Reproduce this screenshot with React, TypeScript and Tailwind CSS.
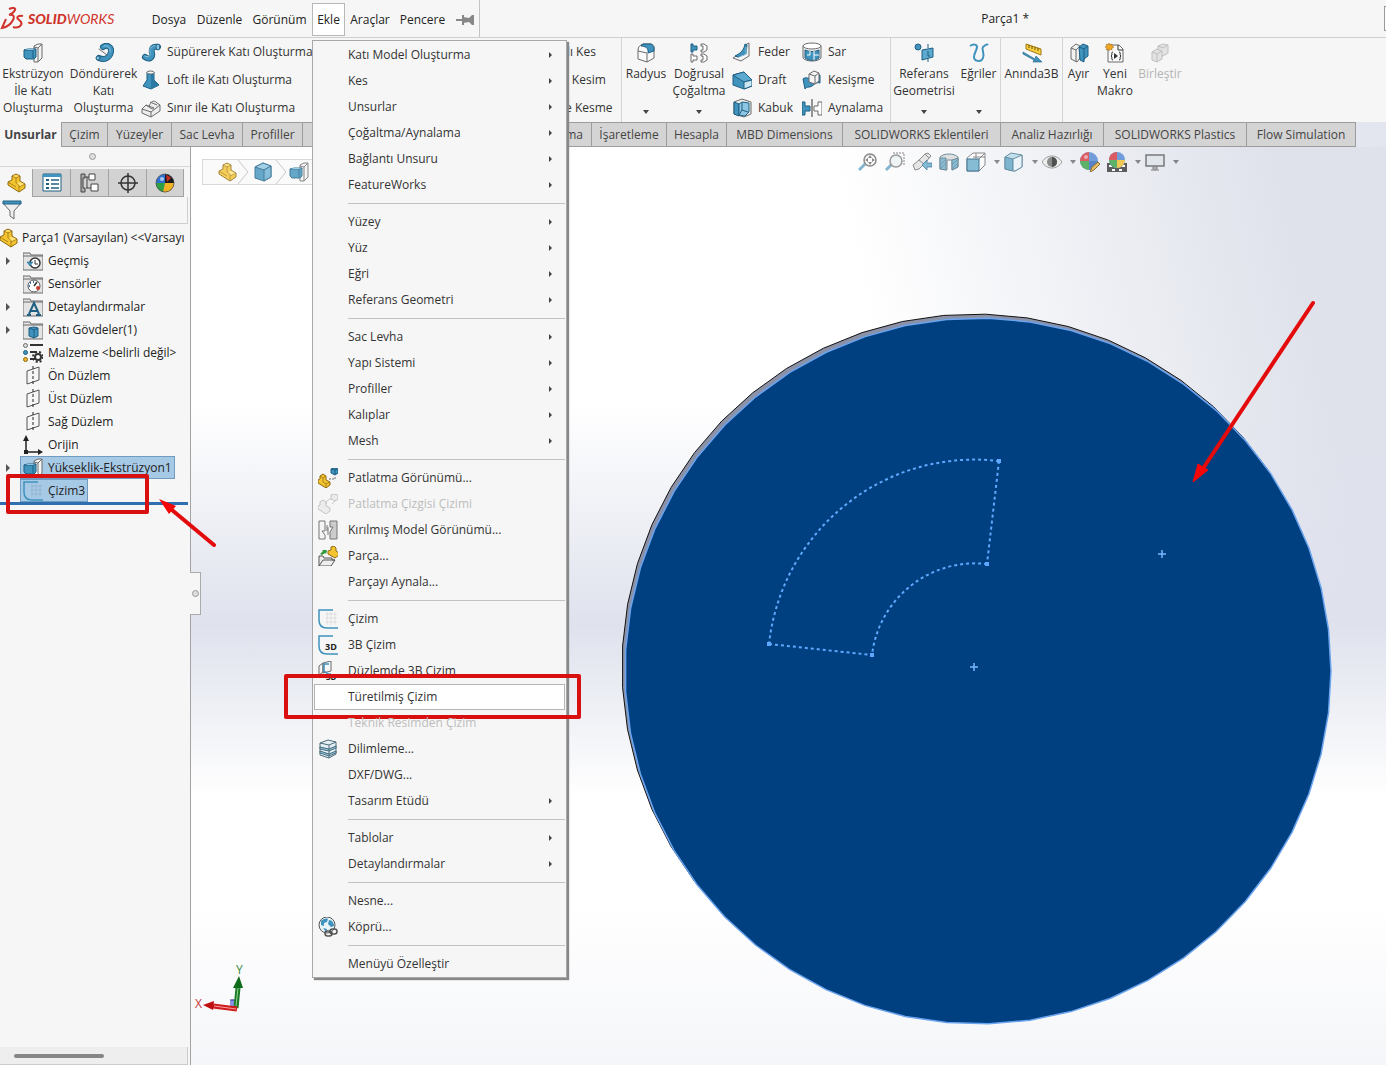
import React from 'react';
import { clsx } from 'clsx';

const B = '#3f93bd';
const BL = '#8cc6e2';
const BD = '#1f5f83';
const G = '#6b6b6b';

// All icons are drawn on a 20x20 grid
const icons: Record<string, React.ReactNode> = {
  extrude: (
    <g strokeWidth="1" strokeLinejoin="round">
      <path d="M11 3l4-2h4v14l-4 4h-4z" fill="#f4f4f4" stroke={G} />
      <path d="M15 5v14M15 5l4-4M11 4l4 1" fill="none" stroke={G} />
      <path d="M1 7l4-1h8v8l-2 2H3l-2-2z" fill={B} stroke={BD} />
      <path d="M1 7h9v8M10 7l3-1" fill="none" stroke={BD} />
      <path d="M2 7l3-1h7l-2 1z" fill={BL} />
    </g>
  ),
  revolve: (
    <g fill="none" strokeLinecap="round">
      <path d="M9 4c4-3 9 0 8 5s-6 9-12 6" stroke={BD} strokeWidth="6" />
      <path d="M9 4c4-3 9 0 8 5s-6 9-12 6" stroke={B} strokeWidth="4" />
      <path d="M10 3c4-1 7 2 6 6" stroke={BL} strokeWidth="1" />
      <circle cx="4" cy="15" r="2" fill={BL} stroke={BD} />
      <path d="M5 6l8 6" stroke={G} strokeWidth="1" />
    </g>
  ),
  sweep: (
    <g fill="none" strokeLinecap="round">
      <path d="M4 15c4 3 8 1 7-4s1-7 6-6" stroke={BD} strokeWidth="6" />
      <path d="M4 15c4 3 8 1 7-4s1-7 6-6" stroke={B} strokeWidth="4" />
      <path d="M4 14c3 2 6 0 5-4s2-7 7-6" stroke={BL} strokeWidth="1" />
      <ellipse cx="17" cy="5" rx="2" ry="3" fill={BL} stroke={BD} />
    </g>
  ),
  loft: (
    <g strokeLinejoin="round">
      <path d="M6 2v8l-4 6 8 3 8-4-5-5V2z" fill={B} stroke={BD} />
      <path d="M10 4v15l8-4-5-5V3z" fill="#2b7aa5" />
      <ellipse cx="9.500" cy="2.500" rx="3.500" ry="1.500" fill="#fff" stroke={G} />
    </g>
  ),
  boundary: (
    <g fill="#eee" stroke={G} strokeLinejoin="round">
      <path d="M1 11l4-4 3 2c1-5 5-8 8-4l3 2v6l-9 6-9-4z" />
      <path d="M1 11l9 3 9-7M10 14v5M5 7l8 3M8 9c1 1 3 2 5 2M9 4l7 3" fill="none" />
    </g>
  ),
  fillet: (
    <g strokeLinejoin="round">
      <path d="M2 7c0-3 2-5 5-6h8c2 1 3 2 3 4v10l-7 4-9-3z" fill="#fafafa" stroke={G} />
      <path d="M5 3l2-2h8c2 1 3 2 3 4v3l-6 2c1-5-3-7-7-7z" fill={B} stroke={BD} />
      <path d="M11 10v9M2 8l9 2" fill="none" stroke={G} />
    </g>
  ),
  pattern: (
    <g fill="#fff" stroke={G}>
      <path d="M2 1h2v2h4v4H4v2H2z" fill={B} stroke={BD} />
      <path d="M12 1h3l3 2v4l-3 2h-3V7h2V3h-2z" />
      <path d="M2 11h2v2h4v4H4v2H2z" />
      <path d="M12 11h3l3 2v4l-3 2h-3v-2h2v-4h-2z" />
    </g>
  ),
  rib: (
    <g strokeLinejoin="round">
      <path d="M13 3l4-2v13l-8 5-8-3 3-2 9-2z" fill="#f4f4f4" stroke={G} />
      <path d="M13 2c-1 6-4 9-10 12l3 1 8-3 1-9z" fill={B} stroke={BD} />
      <path d="M14 5v7l-7 3" fill="none" stroke={BL} />
    </g>
  ),
  draft: (
    <g strokeLinejoin="round">
      <path d="M1 5l11-3 8 8v6l-8 3-11-4z" fill={B} stroke={BD} />
      <path d="M1 5l11-3 8 8-8 2z" fill="#5ba9cf" stroke={BD} />
      <path d="M12 12v7l8-3v-6z" fill="#cbe5f2" stroke={BD} />
    </g>
  ),
  shell: (
    <g strokeLinejoin="round">
      <path d="M2 4l8-3 9 3v12l-7 3-10-3z" fill="#eee" stroke={G} />
      <path d="M2 4l5 2v12l-5-2z" fill={B} stroke={BD} />
      <path d="M7 6l3-2 7 1v9l-4 4-6-1z" fill={BL} stroke={BD} />
      <path d="M10 4v8l-3 5M10 12l6 2" fill="none" stroke={BD} />
    </g>
  ),
  wrap: (
    <g>
      <path d="M1 4v12c2 4 16 4 18 0V4z" fill="#eee" stroke={G} />
      <path d="M3 8c4 2 10 2 14 0v8c-4 3-10 3-14 0z" fill={B} stroke={BD} />
      <path d="M8 9v4H5M12 9v9M12 13h5" fill="none" stroke="#fff" />
      <ellipse cx="10" cy="4" rx="9" ry="3" fill="#fff" stroke={G} />
    </g>
  ),
  intersect: (
    <g strokeLinejoin="round">
      <path d="M1 9c3-3 6 1 9-2s6-2 8-2v8c-4-1-5 1-8 3s-5 0-7 3z" fill={B} stroke={BD} />
      <path d="M7 4l5-3 5 2v8l-4 3-6-2z" fill="#f4f4f4" stroke={G} />
      <path d="M7 4l6 2v8M13 6l4-3" fill="none" stroke={G} />
    </g>
  ),
  mirror: (
    <g fill="#fff" stroke={G}>
      <path d="M0 4h3v4h5v5H3v4H0z" fill={B} stroke={BD} />
      <path d="M20 4h-4v4h-4v5h4v4h4z" />
      <path d="M10 1v18" stroke="#333" />
    </g>
  ),
  refgeo: (
    <g>
      <path d="M8 7l11-2v9L8 17z" fill="#5ba9cf" stroke={BD} />
      <path d="M14 1v4M14 16v3" stroke={BD} />
      <circle cx="4" cy="4" r="3" fill={B} stroke={BD} />
      <path d="M14 8v5M14 13h2" fill="none" stroke={BD} />
    </g>
  ),
  curves: (
    <path d="M1 3c3-2 7-2 7 1s-3 6-3 10 7 6 9 1-2-9 0-11 4-3 5-2" fill="none" stroke={B} strokeWidth="2" />
  ),
  instant: (
    <g strokeLinejoin="round">
      <path d="M4 1l15 5v6L4 6z" fill="#f7cf3f" stroke="#a07a10" />
      <path d="M7 2v3M10 3v3M13 4v3M16 5v3" stroke="#6d5206" />
      <path d="M1 9l12 7 1-3 6 6-9 0 1-2L1 11z" fill={B} stroke={BD} strokeWidth=".6" />
    </g>
  ),
  split: (
    <g strokeLinejoin="round">
      <path d="M2 5l5-4 4 2v12l-3 4-6-3z" fill="#f1f1f1" stroke={G} />
      <path d="M2 5l5 2v12M7 7l4-4" fill="none" stroke={G} />
      <path d="M10 4l4-3 5 2v10l-4 3v3l-4-2z" fill={B} stroke={BD} />
      <path d="M10 4l5 2v11M15 6l4-3" fill="none" stroke={BD} />
    </g>
  ),
  macro: (
    <g>
      <path d="M3 2h11l4 4v13H3z" fill="#fafafa" stroke={G} />
      <path d="M13 2v5h5M8 9c-2 0-1 2-1 3l-1 1 1 1c0 1-1 3 1 3M14 9c2 0 1 2 1 3l1 1-1 1c0 1 1 3-1 3" fill="none" stroke="#333" />
      <path d="M9 10l4 3-4 3z" fill="#333" />
      <path d="M4 0l1 2 2-1v2l2 1-2 1v2l-2-1-1 2-1-2-2 1 1-2-2-1 2-1-1-2 2 1z" fill="#f0a821" stroke="#a8660b" strokeWidth=".5" />
    </g>
  ),
  combine: (
    <g fill="#e2e2e2" stroke="#c0c0c0" strokeLinejoin="round">
      <path d="M8 3l5-2 5 1v8l-5 3-5-2z" />
      <path d="M2 9l5-3 5 2v8l-5 3-5-2z" />
      <path d="M2 9l5 2v8M7 11l5-3M8 3l5 2 5-3" fill="none" />
    </g>
  ),
  part: (
    <g strokeLinejoin="round" stroke="#8f6a12">
      <path d="M2 9l4-2V3l4-2 4 2v5l5 3v4l-6 4L2 12z" fill="#f4c430" />
      <path d="M6 3l4 2 4-2M10 5v5l3 2v7M13 14l6-3M2 9l8 5" fill="none" strokeWidth=".7" />
      <path d="M7 3l3-1 3 1-3 1zM11 10l3-1 4 2-4 2z" fill="#ffe27a" stroke="none" />
    </g>
  ),
  props: (
    <g>
      <path d="M1 1h18v17H1z" fill="#fff" stroke={BD} />
      <path d="M1 1h18v3H1z" fill={B} />
      <path d="M4 6h3v2H4zM4 10h3v2H4zM4 14h3v2H4z" fill={BD} />
      <path d="M9 7h8M9 11h8M9 15h8" stroke={BD} strokeWidth="1.500" />
    </g>
  ),
  config: (
    <g fill="#fff" stroke="#444">
      <path d="M1 1h4v4H3v10h2v4H1z" fill="#aaa" />
      <path d="M9 1h6v6H9zM11 11h7v7h-7zM5 4h4M6 15h5M7 4v11" />
    </g>
  ),
  target: (
    <g fill="none" stroke="#333" strokeWidth="1.500">
      <circle cx="10" cy="10" r="7" />
      <path d="M10 0v20M0 10h20" />
    </g>
  ),
  sphere: (
    <g>
      <circle cx="10" cy="10" r="9" fill="#2f6fd0" />
      <path d="M10 10L10 1a9 9 0 0 1 9 9z" fill="#1b1b1b" />
      <path d="M11 2a9 9 0 0 1 5 3l-4 4z" fill="#c22f24" />
      <path d="M10 10H1a9 9 0 0 0 7 9z" fill="#2fa041" />
      <path d="M10 10l-2 9a9 9 0 0 0 11-9z" fill="#f0b323" />
      <circle cx="10" cy="10" r="9" fill="none" stroke="#444" strokeWidth=".7" />
      <circle cx="7" cy="6" r="2" fill="#fff" opacity=".6" />
    </g>
  ),
  filter: (
    <g strokeLinejoin="round">
      <path d="M1 3h18l-7 8v8l-4-3v-5z" fill="#eee" stroke={G} />
      <path d="M1 1h18v3H1z" fill={B} stroke={BD} />
    </g>
  ),
  cube: (
    <g strokeLinejoin="round" stroke={BD}>
      <path d="M2 5l8-4 8 3v11l-7 4-9-3z" fill={B} />
      <path d="M2 5l8-4 8 3-7 4z" fill={BL} />
      <path d="M11 8v11l7-4V4z" fill="#67b0d3" />
    </g>
  ),
  history: (
    <g>
      <path d="M0 2h7l1 2h12v15H0z" fill="#e4e4e4" stroke={G} />
      <path d="M0 5h20" stroke={G} />
      <circle cx="12" cy="12" r="5" fill="#fff" stroke="#333" strokeWidth="1.500" />
      <path d="M12 9v4h3" fill="none" stroke="#333" />
      <path d="M4 11h6l-3 4z" fill={B} stroke={BD} strokeWidth=".5" />
    </g>
  ),
  sensors: (
    <g>
      <path d="M0 2h7l1 2h12v15H0z" fill="#e4e4e4" stroke={G} />
      <path d="M0 5h20" stroke={G} />
      <circle cx="11" cy="12" r="6" fill="#fff" stroke="#555" />
      <path d="M11 12l3-4" stroke="#333" strokeWidth="1.500" />
      <path d="M7 9h1M10 8h1M6 12h1" stroke="#2b6fb0" strokeWidth="2" />
      <circle cx="15" cy="14" r="2" fill="#cc3b2c" />
    </g>
  ),
  annotations: (
    <g>
      <path d="M0 2h7l1 2h12v15H0z" fill="#e4e4e4" stroke={G} />
      <path d="M0 5h20" stroke={G} />
      <path d="M6 17l5-11 5 11M8 14h6M4 18h4M13 18h5" fill="none" stroke={BD} strokeWidth="2" />
    </g>
  ),
  solids: (
    <g strokeLinejoin="round">
      <path d="M0 2h7l1 2h12v15H0z" fill="#e4e4e4" stroke={G} />
      <path d="M0 5h20" stroke={G} />
      <path d="M6 8l5-1 4 1v8l-4 2-5-2z" fill={B} stroke={BD} />
      <path d="M6 8l5 2v8M11 10l4-2" fill="none" stroke={BD} />
    </g>
  ),
  material: (
    <g>
      <path d="M7 2h13M7 9h7M7 16h5" stroke="#333" strokeWidth="2" />
      <circle cx="2.500" cy="2.500" r="2" fill="#ddd" stroke={G} />
      <circle cx="2.500" cy="9.500" r="2" fill={B} stroke={BD} />
      <circle cx="2.500" cy="16.500" r="2" fill="#f0b323" stroke="#8f6a12" />
      <circle cx="15" cy="14" r="3" fill="#fff" stroke="#333" strokeWidth="2" />
      <circle cx="15" cy="14" r="5" fill="none" stroke="#333" strokeWidth="2" strokeDasharray="2 2" />
    </g>
  ),
  plane: (
    <g fill="none" stroke="#555">
      <path d="M4 5l12-4v13L4 18z" />
      <path d="M10 0v20" stroke="#222" strokeDasharray="3 2" />
    </g>
  ),
  origin: (
    <g fill="#222">
      <path d="M3 17V4M3 17h13" stroke="#222" strokeWidth="1.500" />
      <path d="M0 6l3-6 3 6zM15 14l5 3-5 3zM1 15h4v4H1z" />
    </g>
  ),
  sketch: (
    <g fill="none">
      <path d="M8 5h11M8 9h11M8 13h11M9 3v13M13 3v13M17 3v13" stroke="#000" strokeOpacity=".08" />
      <path d="M15 1H1v10c0 5 3 8 8 8h11" stroke={B} strokeWidth="1.500" />
    </g>
  ),
  sketch3d: (
    <g fill="none">
      <path d="M15 1H1v10c0 5 3 8 8 8h11" stroke={B} strokeWidth="1.500" />
      <text x="7" y="15" fontSize="9" fontWeight="700" fill="#222" fontFamily="Open Sans, sans-serif">3D</text>
    </g>
  ),
  plane3d: (
    <g fill="none">
      <path d="M1 5l4-3v9l-4 3zM5 2l8-2v10l-8 2z" stroke={G} />
      <path d="M11 3H6v7l4 3h3" stroke={B} strokeWidth="1.500" />
      <path d="M3 16h5" stroke="#333" />
      <text x="8" y="19" fontSize="8" fontWeight="700" fill="#222" fontFamily="Open Sans, sans-serif">3D</text>
    </g>
  ),
  explode: (
    <g strokeLinejoin="round">
      <path d="M0 12l2-1V8l3-2 3 2v4l4 2v3l-4 3-8-5z" fill="#f4c430" stroke="#8f6a12" />
      <path d="M2 8l3 2 3-2M5 10v4l3 2v4M8 16l4-2" fill="none" stroke="#8f6a12" strokeWidth=".7" />
      <path d="M13 1l3-1 4 1v4l-3 2-4-2z" fill={B} stroke={BD} />
      <path d="M13 1l4 1v5M17 2l3-1" fill="none" stroke={BD} />
      <path d="M11 11h6V8" fill="none" stroke={G} strokeDasharray="2 1" />
    </g>
  ),
  explodeLine: (
    <g strokeLinejoin="round" fill="#ececec" stroke="#c4c4c4">
      <path d="M0 12l2-1V8l3-2 3 2v4l4 2v3l-4 3-8-5z" />
      <path d="M13 1l3-1 4 1v4l-3 2-4-2z" />
      <path d="M8 10c1-4 3-5 5-5M14 10l3-3" fill="none" />
    </g>
  ),
  broken: (
    <g fill="#f4f4f4" stroke="#777">
      <path d="M1 1h6v10H4l3 4v4H1z" />
      <path d="M19 1h-7v6h3l-3 5v7h7z" fill="#ccc" />
      <path d="M9 5v6M10 7v8" fill="none" />
    </g>
  ),
  insertPart: (
    <g strokeLinejoin="round">
      <path d="M1 10h4l1 2h8v2h3l-4 6H1z" fill="#eee" stroke="#555" />
      <path d="M1 20l4-6h12" fill="none" stroke="#555" />
      <path d="M2 8l3-3-1-1 5 0-1 4-1-1-3 2z" fill="#2f9a3d" />
      <path d="M10 5l3-1V1l3-1 2 2v3l3 2v2l-4 3-7-4z" fill="#f4c430" stroke="#8f6a12" />
    </g>
  ),
  slicing: (
    <g strokeLinejoin="round" stroke="#4d6b79">
      <path d="M2 4l8-3 8 2v12l-7 4-9-3z" fill="#e3eff5" />
      <path d="M2 8l9 2 7-3v2l-7 3-9-2zM2 12l9 3 7-3v2l-7 3-9-3z" fill={BL} />
      <path d="M2 4l9 2 7-3M11 6v13" fill="none" />
    </g>
  ),
  hyperlink: (
    <g>
      <circle cx="9" cy="8" r="8" fill="#e8f3f8" stroke="#555" />
      <path d="M3 4c2-2 5-3 7-2l-1 3-3 1v3l-3-1zM11 3c3 0 5 3 5 6l-3 1-3-3zM5 11l4 1-1 3z" fill={B} />
      <g fill="none" stroke="#555" strokeWidth="1.500">
        <rect x="7" y="14" width="7" height="5" rx="2.500" />
        <rect x="12" y="12" width="7" height="5" rx="2.500" />
      </g>
    </g>
  ),
  zoomFit: (
    <g fill="none">
      <path d="M1 18l6-6" stroke="#6fa9c6" strokeWidth="3" />
      <circle cx="12" cy="8" r="6" fill="#fafafa" stroke="#777" strokeWidth="1.500" />
      <path d="M12 3l2 3h-4zM12 13l2-3h-4zM7 8l3-2v4zM17 8l-3-2v4z" fill="#777" />
    </g>
  ),
  zoomArea: (
    <g fill="none">
      <path d="M8 1h11v12" stroke="#777" strokeDasharray="2 1" />
      <path d="M1 18l6-6" stroke="#6fa9c6" strokeWidth="3" />
      <circle cx="11" cy="9" r="6" fill="#eef3f5" stroke="#888" strokeWidth="1.500" />
    </g>
  ),
  prevView: (
    <g strokeLinejoin="round">
      <path d="M1 13l6-5 6-6 3-1 3 3-7 8-5 5-4 1z" fill="#e2e2e2" stroke="#777" />
      <path d="M7 8l5 4M13 2l4 4" stroke="#777" />
      <path d="M20 11h-5V8l-5 5 5 5v-3h5z" fill="#6fb0d0" stroke={BD} strokeWidth=".7" />
    </g>
  ),
  section: (
    <g stroke="#5a7b8b">
      <path d="M1 5c4-4 14-4 18 0v10l-6 3V8H8v10l-7-1z" fill="#ddd" />
      <path d="M1 6h6v12l-6-1z" fill="#74b3cf" />
      <path d="M13 8l6-2v9l-6 3z" fill="#74b3cf" />
      <path d="M1 13l6-6M1 17l6-6M13 13l6-6M13 17l6-6" strokeWidth=".7" />
    </g>
  ),
  viewCube: (
    <g strokeLinejoin="round">
      <path d="M1 6l6-5h12v12l-6 6H1z" fill="#fff" stroke="#777" />
      <path d="M1 7h12v12H1z" fill="#74b3cf" stroke={BD} />
      <path d="M13 7l6-6M10 1v7M7 5h12" fill="none" stroke="#777" />
    </g>
  ),
  display: (
    <g strokeLinejoin="round" stroke="#4f7d93">
      <path d="M1 5l6-4 11 2v12l-7 4-10-2z" fill="#bcdceb" />
      <path d="M1 5l8 2v12l-8-2z" fill="#69abc9" />
      <path d="M9 7l9-4v12l-7 4H9z" fill="#eaf4f9" />
    </g>
  ),
  eye: (
    <g>
      <path d="M0 10c5-8 15-8 20 0-5 8-15 8-20 0z" fill="#eee" stroke="#888" />
      <circle cx="10" cy="10" r="5" fill="#777" />
      <path d="M10 5a5 5 0 0 1 0 10z" fill="#333" />
    </g>
  ),
  appearance: (
    <g>
      <circle cx="9" cy="9" r="9" fill="#5d8fd6" />
      <path d="M9 9V0a9 9 0 0 0-9 9z" fill="#d9434a" />
      <path d="M9 9H0a9 9 0 0 0 9 9z" fill="#46a850" />
      <path d="M9 9v9a9 9 0 0 0 9-9z" fill="#3f73c2" />
      <circle cx="6" cy="5" r="2" fill="#fff" opacity=".5" />
      <path d="M10 20l2-5 6-5 2 2-6 6z" fill="#e8b54a" stroke="#7a5618" />
    </g>
  ),
  scene: (
    <g>
      <path d="M0 11h20v9H0z" fill="#444" />
      <path d="M2 13h3v2H2zM8 13h3v2H8zM15 13h3v2h-3zM5 17h3v2H5zM12 17h3v2h-3z" fill="#fff" />
      <circle cx="10" cy="8" r="8" fill="#5d8fd6" />
      <path d="M10 8V0a8 8 0 0 0-8 8z" fill="#d9434a" />
      <path d="M10 8H2a8 8 0 0 0 8 8z" fill="#46a850" />
      <path d="M10 8v8a8 8 0 0 0 8-8z" fill="#f0c23a" />
    </g>
  ),
  monitor: (
    <g fill="#dfe6ea" stroke="#666">
      <path d="M1 3h18v11H1z" strokeWidth="1.500" />
      <path d="M8 15h4v2H8zM6 18h8" />
    </g>
  ),
};

const Icon: React.FC<{ name: string; className?: string }> = ({ name, className }) => (
  <svg viewBox="0 0 20 20" className={clsx('size-5 shrink-0', className)} aria-hidden="true">
    {icons[name]}
  </svg>
);

const Caret = () => (
  <svg viewBox="0 0 6 4" className="h-1 w-1.5 shrink-0" aria-hidden="true">
    <path d="M0 0h6L3 4z" fill="#444" />
  </svg>
);

interface BigButtonProps {
  icon: string;
  lines: string[];
  width: string;
  dropdown?: boolean;
  disabled?: boolean;
}

const BigButton: React.FC<BigButtonProps> = ({ icon, lines, width, dropdown, disabled }) => (
  <button
    disabled={disabled}
    className={clsx('flex h-full shrink-0 flex-col items-center pt-[5px] leading-[17px]', width, disabled && 'text-[#b4b4b4]')}
  >
    <Icon name={icon} className="mb-0.5" />
    {lines.map((line) => (
      <span key={line} className="whitespace-nowrap">{line}</span>
    ))}
    {dropdown && <span className="mt-auto pb-2"><Caret /></span>}
  </button>
);

const SmallColumn: React.FC<{ items: [string, string][]; width?: string }> = ({ items, width }) => (
  <div className={clsx('flex shrink-0 flex-col', width)}>
    {items.map(([icon, label]) => (
      <button key={label} className="flex h-7 items-center gap-1.5 whitespace-nowrap">
        <Icon name={icon} />
        {label}
      </button>
    ))}
  </div>
);

interface MenuEntry {
  label: string;
  icon?: string;
  sub?: boolean;
  disabled?: boolean;
  active?: boolean;
}

const menuGroups: MenuEntry[][] = [
  [
    { label: 'Katı Model Oluşturma', sub: true },
    { label: 'Kes', sub: true },
    { label: 'Unsurlar', sub: true },
    { label: 'Çoğaltma/Aynalama', sub: true },
    { label: 'Bağlantı Unsuru', sub: true },
    { label: 'FeatureWorks', sub: true },
  ],
  [
    { label: 'Yüzey', sub: true },
    { label: 'Yüz', sub: true },
    { label: 'Eğri', sub: true },
    { label: 'Referans Geometri', sub: true },
  ],
  [
    { label: 'Sac Levha', sub: true },
    { label: 'Yapı Sistemi', sub: true },
    { label: 'Profiller', sub: true },
    { label: 'Kalıplar', sub: true },
    { label: 'Mesh', sub: true },
  ],
  [
    { label: 'Patlatma Görünümü...', icon: 'explode' },
    { label: 'Patlatma Çizgisi Çizimi', icon: 'explodeLine', disabled: true },
    { label: 'Kırılmış Model Görünümü...', icon: 'broken' },
    { label: 'Parça...', icon: 'insertPart' },
    { label: 'Parçayı Aynala...' },
  ],
  [
    { label: 'Çizim', icon: 'sketch' },
    { label: '3B Çizim', icon: 'sketch3d' },
    { label: 'Düzlemde 3B Çizim', icon: 'plane3d' },
    { label: 'Türetilmiş Çizim', active: true },
    { label: 'Teknik Resimden Çizim', disabled: true },
    { label: 'Dilimleme...', icon: 'slicing' },
    { label: 'DXF/DWG...' },
    { label: 'Tasarım Etüdü', sub: true },
  ],
  [
    { label: 'Tablolar', sub: true },
    { label: 'Detaylandırmalar', sub: true },
  ],
  [
    { label: 'Nesne...' },
    { label: 'Köprü...', icon: 'hyperlink' },
  ],
  [{ label: 'Menüyü Özelleştir' }],
];

const InsertMenu = () => (
  <div
    role="menu"
    className="absolute top-full left-0 z-20 mt-1 w-[255px] border border-[#a8a8a8] bg-[#f6f6f6] px-px pt-px text-[#333] shadow-[2px_2px_1px_#888]"
  >
    {menuGroups.map((group, i) => (
      <div key={group[0].label}>
        {i > 0 && <div className="ml-[34px] flex h-[11px] items-center"><div className="h-px w-full bg-[#c2c2c2]" /></div>}
        {group.map((item) => (
          <div key={item.label} className="relative">
            <button
              role="menuitem"
              disabled={item.disabled}
              className={clsx(
                'flex h-[26px] w-full items-center gap-2.5 border pr-3 pl-[3px] text-left',
                item.active ? 'border-[#b5b5b5] bg-white' : 'border-transparent',
                item.disabled && 'text-[#bdbdbd]'
              )}
            >
              {item.icon ? <Icon name={item.icon} /> : <span className="w-5" />}
              <span className="flex-1">{item.label}</span>
              {item.sub && (
                <svg viewBox="0 0 3 6" className="h-1.5 w-[3px]"><path d="M0 0v6l3-3z" fill="#444" /></svg>
              )}
            </button>
            {/* callout frame */}
            {item.active && (
              <div className="pointer-events-none absolute -top-[10px] -right-4 -bottom-[9px] -left-[30px] rounded-xs border-4 border-[#d8100f]" />
            )}
          </div>
        ))}
      </div>
    ))}
  </div>
);

const Logo = () => (
  <div className="flex w-[146px] shrink-0 items-center gap-1 text-[#d0342c]">
    <svg viewBox="0 0 24 24" className="h-6 w-6" fill="none" stroke="currentColor" strokeWidth="2">
      <path d="M9 2c4-2 7-1 6 1s-3 4-6 5c4-1 6 1 4 5s-6 7-11 8l4-9" />
      <path d="M23 9c-4-1-7 1-5 3s5 3 3 6-5 3-8 2" />
    </svg>
    <span className="font-[Lato] text-[14px] leading-none italic">
      <b className="font-black">SOLID</b>WORKS
    </span>
  </div>
);

const TopBar = () => (
  <header className="flex h-[38px] border-b border-[#cfcfcf] text-[#222]">
    <Logo />
    <nav className="flex shrink-0 items-center border-r border-[#c4c4c4] pt-0.5">
      <button className="w-[46px]">Dosya</button>
      <button className="w-[55px]">Düzenle</button>
      <button className="w-[65px]">Görünüm</button>
      <div className="relative">
        <button className="h-[33px] w-[33px] border border-[#b8b8b8] bg-white">Ekle</button>
        <InsertMenu />
      </div>
      <button className="w-[50px]">Araçlar</button>
      <button className="w-[55px]">Pencere</button>
      <button aria-label="Sabitle" className="flex w-[29px] justify-center">
        <svg viewBox="0 0 18 12" className="h-3 w-[18px]">
          <path d="M0 6h8M7 1v10" stroke="#888" strokeWidth="2" />
          <path d="M7 3l6 1 3-3h2v10h-2l-3-3-6 1z" fill="#888" />
        </svg>
      </button>
    </nav>
    <div className="flex flex-1 items-center justify-end">
      <span className="mr-[355px]">Parça1 *</span>
      <span className="h-[25px] w-0.5 border border-r-0 border-[#999] bg-white" />
    </div>
  </header>
);

const Ribbon = () => (
  <div className="flex h-[84px] text-[#333]">
    <div className="flex w-[622px] shrink-0 border-r border-[#d4d4d4]">
      <BigButton icon="extrude" lines={['Ekstrüzyon', 'İle Katı', 'Oluşturma']} width="w-[66px]" />
      <BigButton icon="revolve" lines={['Döndürerek', 'Katı', 'Oluşturma']} width="w-[75px]" />
      <SmallColumn
        items={[
          ['sweep', 'Süpürerek Katı Oluşturma'],
          ['loft', 'Loft ile Katı Oluşturma'],
          ['boundary', 'Sınır ile Katı Oluşturma'],
        ]}
        width="flex-1"
      />
      <SmallColumn
        items={[
          ['sweep', 'Sarmalı Kes'],
          ['loft', 'Loft ile Kesim'],
          ['boundary', 'Sınır ile Kesme'],
        ]}
        width="w-[116px]"
      />
    </div>
    <div className="flex shrink-0 border-r border-[#d4d4d4]">
      <BigButton icon="fillet" lines={['Radyus']} width="w-12" dropdown />
      <BigButton icon="pattern" lines={['Doğrusal', 'Çoğaltma']} width="w-[58px]" dropdown />
      <SmallColumn items={[['rib', 'Feder'], ['draft', 'Draft'], ['shell', 'Kabuk']]} width="w-[74px] pl-1" />
      <SmallColumn items={[['wrap', 'Sar'], ['intersect', 'Kesişme'], ['mirror', 'Aynalama']]} width="w-[88px]" />
    </div>
    <div className="flex shrink-0 border-r border-[#d4d4d4]">
      <BigButton icon="refgeo" lines={['Referans', 'Geometrisi']} width="w-[66px]" dropdown />
      <BigButton icon="curves" lines={['Eğriler']} width="w-[43px]" dropdown />
    </div>
    <div className="flex shrink-0 border-r border-[#d4d4d4]">
      <BigButton icon="instant" lines={['Anında3B']} width="w-[61px]" />
    </div>
    <div className="flex shrink-0">
      <BigButton icon="split" lines={['Ayır']} width="w-[31px]" />
      <BigButton icon="macro" lines={['Yeni', 'Makro']} width="w-[42px]" />
      <BigButton icon="combine" lines={['Birleştir']} width="w-12" disabled />
    </div>
  </div>
);

const tabs: [string, string][] = [
  ['Çizim', 'w-[46px]'],
  ['Yüzeyler', 'w-[64px]'],
  ['Sac Levha', 'w-[71px]'],
  ['Profiller', 'w-[60px]'],
  ['Veri Taşıma', 'w-[289px] text-right pr-2'],
  ['İşaretleme', 'w-[75px]'],
  ['Hesapla', 'w-[60px]'],
  ['MBD Dimensions', 'w-[116px]'],
  ['SOLIDWORKS Eklentileri', 'w-[158px]'],
  ['Analiz Hazırlığı', 'w-[103px]'],
  ['SOLIDWORKS Plastics', 'w-[143px]'],
  ['Flow Simulation', 'w-[109px]'],
];

const CommandTabs = () => (
  <div className="flex h-[25px] bg-linear-to-r from-white from-70% to-[#e2e5ee] text-[#444]">
    <button className="w-[61px] shrink-0 bg-[#f6f6f6] font-bold">Unsurlar</button>
    <div className="flex border-y border-l border-[#9c9c9c]">
      {tabs.map(([label, width]) => (
        <button key={label} className={clsx('shrink-0 border-r border-[#9c9c9c] bg-[#d4d4d4] whitespace-nowrap', width)}>
          {label}
        </button>
      ))}
    </div>
  </div>
);

interface TreeNode {
  label: string;
  icon: string;
  expandable?: boolean;
  selected?: boolean;
}

const treeNodes: TreeNode[] = [
  { label: 'Geçmiş', icon: 'history', expandable: true },
  { label: 'Sensörler', icon: 'sensors' },
  { label: 'Detaylandırmalar', icon: 'annotations', expandable: true },
  { label: 'Katı Gövdeler(1)', icon: 'solids', expandable: true },
  { label: 'Malzeme <belirli değil>', icon: 'material' },
  { label: 'Ön Düzlem', icon: 'plane' },
  { label: 'Üst Düzlem', icon: 'plane' },
  { label: 'Sağ Düzlem', icon: 'plane' },
  { label: 'Orijin', icon: 'origin' },
  { label: 'Yükseklik-Ekstrüzyon1', icon: 'extrude', expandable: true, selected: true },
  { label: 'Çizim3', icon: 'sketch', selected: true },
];

const panelTabs = [
  ['props', 'Özellikler'],
  ['config', 'Konfigürasyonlar'],
  ['target', 'Ölçülendirme'],
  ['sphere', 'Görünümler'],
];

const FeatureTree = () => (
  <aside className="relative z-10 flex w-[191px] shrink-0 flex-col border-r border-[#a3a3a3] bg-[#f6f6f6] text-[#222]">
    <div className="flex h-5 items-center border-b border-[#d6d6d6] pl-[89px]">
      <span className="size-[7px] rounded-full border border-[#999] bg-[#ddd]" />
    </div>
    <div className="mt-0.5 flex h-7">
      <button aria-label="Unsur ağacı" className="flex w-8 items-center justify-center"><Icon name="part" /></button>
      {panelTabs.map(([icon, label]) => (
        <button
          key={icon}
          aria-label={label}
          className="flex w-[38px] items-center justify-center border-b border-l border-[#a3a3a3] bg-[#d2d2d2] last:border-r"
        >
          <Icon name={icon} />
        </button>
      ))}
    </div>
    <label className="mr-0.5 flex h-[27px] items-center border-r border-b border-[#cfcfcf] pl-0.5">
      <Icon name="filter" />
      <input aria-label="Filtre" className="min-w-0 flex-1 bg-transparent outline-none" />
    </label>
    <ul className="mr-0.5 border-b-3 border-[#2f6fb0] pt-0.5 whitespace-nowrap">
      <li className="flex h-[23px] items-center gap-1">
        <Icon name="part" className="-ml-0.5" />
        Parça1 (Varsayılan) &lt;&lt;Varsayı
      </li>
      {treeNodes.map((node) => (
        <li key={node.label} className="flex h-[23px] items-center">
          <span className="flex w-5 items-center pl-1.5">
            {node.expandable && (
              <svg viewBox="0 0 4 8" className="h-2 w-1"><path d="M0 0v8l4-4z" fill="#555" /></svg>
            )}
          </span>
          <span
            className={clsx(
              'flex h-full items-center gap-[5px] border pr-0.5 pl-0.5',
              node.selected ? 'border-[#6f9cc0] bg-[#a6c9e6]' : 'border-transparent'
            )}
          >
            <Icon name={node.icon} />
            {node.label}
          </span>
        </li>
      ))}
    </ul>
    <div className="mt-auto mr-0.5 flex h-[18px] items-center border-r border-b border-[#ccc] bg-[#eee] pl-3.5">
      <span className="h-1 w-[90px] rounded-full bg-[#868686]" />
    </div>

    {/* callout around the selected sketch */}
    <div className="pointer-events-none absolute top-[327px] left-[6px] h-10 w-[143px] rounded-xs border-4 border-[#d8100f]" />
    <button
      aria-label="Paneli daralt"
      className="absolute top-[425px] left-[190px] flex h-[43px] w-[11px] items-center justify-center border border-l-0 border-[#aaa] bg-[#f6f6f6]"
    >
      <span className="size-[7px] rounded-full border border-[#999] bg-[#ddd]" />
    </button>
  </aside>
);

const viewTools: [string, boolean][] = [
  ['zoomFit', false],
  ['zoomArea', false],
  ['prevView', false],
  ['section', false],
  ['viewCube', true],
  ['display', true],
  ['eye', true],
  ['appearance', false],
  ['scene', true],
  ['monitor', true],
];

const SIDES = 53;

// The disc is tessellated, so its outline is a polygon
const discPoints = (cx: number, cy: number, r: number) =>
  Array.from({ length: SIDES }, (_, i) => {
    const a = (i / SIDES) * Math.PI * 2 - Math.PI / 2 + 0.03;
    return `${(cx + r * Math.cos(a)).toFixed(1)},${(cy + r * Math.sin(a)).toFixed(1)}`;
  }).join(' ');

const Scene = () => (
  <svg
    viewBox="191 147 1195 918"
    preserveAspectRatio="xMidYMid slice"
    className="absolute inset-0 h-full w-full"
    aria-label="Parça görünümü"
  >
    <polygon points={discPoints(975, 667, 353)} fill="#8b92a8" stroke="#111" strokeWidth="1" />
    <polygon points={discPoints(978, 671, 353)} fill="#004080" stroke="#6aa3ee" strokeWidth="1.500" />

    <g fill="none" stroke="#5fa8ff" strokeWidth="2" strokeDasharray="3 3">
      <path d="M999 461A207 207 0 0 0 769 644" />
      <path d="M999 461L987 564" />
      <path d="M987 564A104 104 0 0 0 872 655" />
      <path d="M769 644L872 655" />
    </g>
    <g fill="#5fa8ff">
      <path d="M997 459h4v4h-4zM985 562h4v4h-4zM870 653h4v4h-4zM767 642h4v4h-4z" />
    </g>
    <path d="M970 667h8M974 663v8M1158 554h8M1162 550v8" stroke="#7ab6ff" strokeWidth="1.500" />

    <path d="M1313 303L1204 467" stroke="#e30b0b" strokeWidth="4" strokeLinecap="round" />
    <path d="M1193 482l5-18 10 6z" fill="#f50505" stroke="#f50505" />

    {/* axis triad */}
    <path d="M230 1001c2-2 4-2 6 0v6h-6z" fill="#8a92e8" />
    <path d="M230 1000h5" stroke="#222a90" strokeWidth="1" />
    <path d="M236 1008l2-20" stroke="#1d7a26" strokeWidth="5" />
    <path d="M236 1006l2-18" stroke="#8fd08f" strokeWidth="1" />
    <path d="M233 988l6-12 4 12z" fill="#0f6a1a" />
    <path d="M237 1009l-24-3" stroke="#d01c1c" strokeWidth="5" />
    <path d="M236 1009l-22-3" stroke="#f5a0a0" strokeWidth="1" />
    <path d="M203 1005l11-4-1 9z" fill="#c01010" />
    <g fontSize="12" fontFamily="Open Sans, sans-serif">
      <text x="195" y="1008" fill="#c43a3a">X</text>
      <text x="236" y="974" fill="#3a8a42">Y</text>
    </g>
  </svg>
);

const Viewport = () => (
  <main className="relative flex-1 overflow-hidden bg-white bg-[linear-gradient(to_bottom,transparent_0%,transparent_28%,#dfe2ed_52%,#fff_71%,#fff_82%,#f5f6f9_100%),linear-gradient(78deg,#fff_60%,#dfe2eb_92%)]">
    <Scene />
    <div className="relative flex items-start justify-between pr-[203px] pl-[11px]">
      <div className="mt-3 flex h-[26px] w-[150px] items-center border border-[#d9d9d9] bg-[#fafafa] pl-3.5">
        <Icon name="part" className="opacity-80" />
        <svg viewBox="0 0 12 24" className="mr-1 h-6 w-3"><path d="M1 0l10 12L1 24" fill="none" stroke="#c8c8c8" /></svg>
        <Icon name="cube" className="opacity-80" />
        <svg viewBox="0 0 12 24" className="mx-0.5 h-6 w-3"><path d="M1 0l10 12L1 24" fill="none" stroke="#c8c8c8" /></svg>
        <Icon name="extrude" className="opacity-80" />
      </div>
      <div className="mt-[5px] flex">
        {viewTools.map(([name, dropdown]) => (
          <button key={name} aria-label={name} className={clsx('flex items-center gap-2', dropdown ? 'w-[38px]' : 'w-[27px]')}>
            <Icon name={name} className="opacity-85" />
            {dropdown && <span className="opacity-60"><Caret /></span>}
          </button>
        ))}
      </div>
    </div>
  </main>
);

export default function App() {
  return (
    <div className="flex min-h-screen flex-col bg-white pr-1 pb-1 font-['Open_Sans','Noto_Sans',sans-serif] text-[12px] leading-4">
      <div className="relative z-20 bg-[#f6f6f6]">
        <TopBar />
        <Ribbon />
        <CommandTabs />
      </div>
      <div className="relative flex flex-1">
        <FeatureTree />
        <Viewport />
        {/* arrow pointing at the selected sketch */}
        <svg viewBox="0 0 60 50" className="pointer-events-none absolute top-[351px] left-[158px] z-10 h-[50px] w-[60px]">
          <path d="M56 47L14 12" stroke="#e30b0b" strokeWidth="4" strokeLinecap="round" />
          <path d="M1 1l17 7-7 8z" fill="#f50505" />
        </svg>
      </div>
    </div>
  );
}
